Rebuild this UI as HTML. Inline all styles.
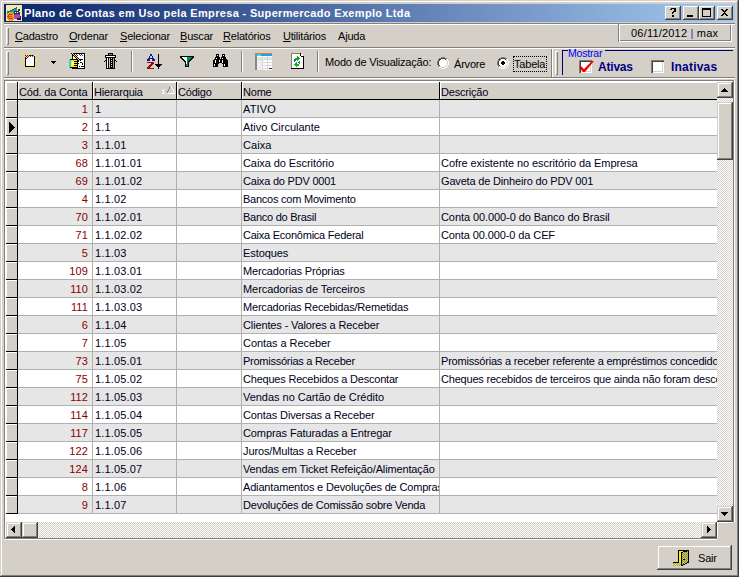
<!DOCTYPE html>
<html><head><meta charset="utf-8">
<style>
*{margin:0;padding:0;box-sizing:border-box}
html,body{width:739px;height:577px;overflow:hidden;background:#D4D0C8;font-family:"Liberation Sans",sans-serif;font-size:11px;color:#000}
.a{position:absolute}
.txt{position:absolute;white-space:nowrap;line-height:13px;letter-spacing:-0.2px}
.u{text-decoration:underline;text-underline-offset:1px}
svg{position:absolute;overflow:visible}
</style></head><body>
<div class="a" style="left:0px;top:0px;width:739px;height:577px;background:#D4D0C8;"></div>
<div class="a" style="left:0px;top:0px;width:738px;height:1px;background:#D4D0C8;"></div>
<div class="a" style="left:0px;top:0px;width:1px;height:576px;background:#D4D0C8;"></div>
<div class="a" style="left:1px;top:1px;width:736px;height:1px;background:#FFFFFF;"></div>
<div class="a" style="left:1px;top:1px;width:1px;height:575px;background:#FFFFFF;"></div>
<div class="a" style="left:0px;top:576px;width:739px;height:1px;background:#404040;"></div>
<div class="a" style="left:738px;top:0px;width:1px;height:577px;background:#404040;"></div>
<div class="a" style="left:1px;top:575px;width:737px;height:1px;background:#808080;"></div>
<div class="a" style="left:737px;top:1px;width:1px;height:575px;background:#808080;"></div>
<div class="a" style="left:4px;top:4px;width:731px;height:18px;background:linear-gradient(to right,#0A246A,#A6CAF0)"></div>
<svg style="left:6px;top:5px" width="16" height="16" shape-rendering="crispEdges"><rect x="0" y="0" width="16" height="16" fill="#F6E8A8"/><rect x="1" y="6" width="1" height="1" fill="#0C6C50"/><rect x="1" y="7" width="1" height="3" fill="#10A8A0"/><rect x="1" y="10" width="1" height="1" fill="#40D8E8"/><rect x="2" y="6" width="1" height="1" fill="#0C6C50"/><rect x="2" y="7" width="1" height="3" fill="#10A8A0"/><rect x="2" y="10" width="1" height="1" fill="#40D8E8"/><rect x="3" y="6" width="1" height="1" fill="#0C6C50"/><rect x="3" y="7" width="1" height="3" fill="#10A8A0"/><rect x="3" y="10" width="1" height="1" fill="#40D8E8"/><rect x="4" y="5" width="1" height="1" fill="#0C6C50"/><rect x="4" y="6" width="1" height="3" fill="#10A8A0"/><rect x="4" y="9" width="1" height="1" fill="#40D8E8"/><rect x="5" y="5" width="1" height="1" fill="#0C6C50"/><rect x="5" y="6" width="1" height="3" fill="#10A8A0"/><rect x="5" y="9" width="1" height="1" fill="#40D8E8"/><rect x="6" y="4" width="1" height="1" fill="#0C6C50"/><rect x="6" y="5" width="1" height="3" fill="#10A8A0"/><rect x="6" y="8" width="1" height="1" fill="#40D8E8"/><rect x="7" y="4" width="1" height="1" fill="#0C6C50"/><rect x="7" y="5" width="1" height="3" fill="#10A8A0"/><rect x="7" y="8" width="1" height="1" fill="#40D8E8"/><rect x="8" y="3" width="1" height="1" fill="#0C6C50"/><rect x="8" y="4" width="1" height="3" fill="#10A8A0"/><rect x="8" y="7" width="1" height="1" fill="#40D8E8"/><rect x="9" y="3" width="1" height="1" fill="#0C6C50"/><rect x="9" y="4" width="1" height="3" fill="#10A8A0"/><rect x="9" y="7" width="1" height="1" fill="#40D8E8"/><rect x="10" y="2" width="1" height="1" fill="#0C6C50"/><rect x="10" y="3" width="1" height="3" fill="#10A8A0"/><rect x="10" y="6" width="1" height="1" fill="#40D8E8"/><rect x="8" y="6" width="6" height="5" fill="#3A3060"/><rect x="12" y="4" width="2" height="2" fill="#3A3060"/><rect x="9" y="7" width="1" height="1" fill="#F0F0FF"/><rect x="11" y="7" width="1" height="1" fill="#F0F0FF"/><rect x="13" y="6" width="1" height="1" fill="#F0F0FF"/><rect x="10" y="9" width="1" height="1" fill="#F0F0FF"/><rect x="12" y="9" width="1" height="1" fill="#F0F0FF"/><rect x="8" y="10" width="6" height="4" fill="#B040C8"/><rect x="9" y="9" width="4" height="1" fill="#9038B0"/><rect x="11" y="13" width="4" height="2" fill="#202030"/><rect x="14" y="11" width="1" height="3" fill="#202030"/><rect x="2" y="8" width="6" height="7" fill="#F09818"/><rect x="1" y="9" width="1" height="5" fill="#F09818"/><rect x="3" y="15" width="4" height="1" fill="#F09818"/><rect x="3" y="7" width="4" height="1" fill="#F0A020"/><rect x="3" y="9" width="4" height="1" fill="#C03810"/><rect x="2" y="10" width="1" height="3" fill="#C03810"/><rect x="3" y="13" width="4" height="1" fill="#C03810"/><rect x="1" y="11" width="5" height="1" fill="#D04818"/><rect x="7" y="9" width="1" height="1" fill="#F8D060"/><rect x="7" y="13" width="1" height="1" fill="#F8D060"/></svg>
<div class="txt" style="left:24px;top:7px;color:#fff;font-weight:bold;letter-spacing:0.33px">Plano de Contas em Uso pela Empresa - Supermercado Exemplo Ltda</div>
<div class="a" style="left:665px;top:6px;width:16px;height:14px;background:#D4D0C8;box-shadow:inset -1px -1px #404040,inset 1px 1px #FFFFFF,inset -2px -2px #808080,inset 2px 2px #D4D0C8"></div>
<div class="a" style="left:683px;top:6px;width:16px;height:14px;background:#D4D0C8;box-shadow:inset -1px -1px #404040,inset 1px 1px #FFFFFF,inset -2px -2px #808080,inset 2px 2px #D4D0C8"></div>
<div class="a" style="left:699px;top:6px;width:16px;height:14px;background:#D4D0C8;box-shadow:inset -1px -1px #404040,inset 1px 1px #FFFFFF,inset -2px -2px #808080,inset 2px 2px #D4D0C8"></div>
<div class="a" style="left:717px;top:6px;width:16px;height:14px;background:#D4D0C8;box-shadow:inset -1px -1px #404040,inset 1px 1px #FFFFFF,inset -2px -2px #808080,inset 2px 2px #D4D0C8"></div>
<svg style="left:665px;top:6px" width="16" height="14" shape-rendering="crispEdges"><path d="M5 3 L6 2 L10 2 L11 3 L11 5 L10 6 L9 6 L8 7 L8 8 L7 8 L7 6 L8 5 L9 5 L9 3 L7 3 L7 4 L5 4 Z" fill="#000"/><rect x="7" y="9" width="2" height="2" fill="#000"/></svg>
<svg style="left:683px;top:6px" width="16" height="14" shape-rendering="crispEdges"><rect x="4" y="9" width="6" height="2" fill="#000"/></svg>
<svg style="left:699px;top:6px" width="16" height="14" shape-rendering="crispEdges"><rect x="3" y="2" width="9" height="9" fill="#000"/><rect x="4" y="4" width="7" height="6" fill="#D4D0C8"/></svg>
<svg style="left:717px;top:6px" width="16" height="14" shape-rendering="crispEdges"><path d="M4 3h2v1h1v1h1v-1h1v-1h2v1h-1v1h-1v1h-1v1h1v1h1v1h1v1h-2v-1h-1v-1h-1v1h-1v1h-2v-1h1v-1h1v-1h1v-1h-1v-1h-1v-1h-1z" fill="#000"/></svg>
<div class="a" style="left:4px;top:23px;width:731px;height:1px;background:#808080;"></div>
<div class="a" style="left:4px;top:24px;width:731px;height:1px;background:#FFFFFF;"></div>
<div class="a" style="left:4px;top:47px;width:731px;height:1px;background:#808080;"></div>
<div class="a" style="left:4px;top:48px;width:731px;height:1px;background:#FFFFFF;"></div>
<div class="a" style="left:6px;top:27px;width:3px;height:18px;background:#D4D0C8;box-shadow:inset 1px 1px #FFFFFF,inset -1px -1px #808080"></div>
<div class="txt" style="left:15px;top:30px;color:#000;"><span class="u">C</span>adastro</div>
<div class="txt" style="left:69px;top:30px;color:#000;"><span class="u">O</span>rdenar</div>
<div class="txt" style="left:120px;top:30px;color:#000;"><span class="u">S</span>elecionar</div>
<div class="txt" style="left:180px;top:30px;color:#000;"><span class="u">B</span>uscar</div>
<div class="txt" style="left:223px;top:30px;color:#000;"><span class="u">R</span>elatórios</div>
<div class="txt" style="left:283px;top:30px;color:#000;"><span class="u">U</span>tilitários</div>
<div class="txt" style="left:338px;top:30px;color:#000;">A<span class="u">j</span>uda</div>
<div class="a" style="left:618px;top:23px;width:114px;height:19px;background:#D4D0C8;box-shadow:inset 1px 1px #808080,inset -1px -1px #FFFFFF,inset 2px 2px #FFFFFF,inset -2px -2px #808080"></div>
<div class="txt" style="left:631px;top:27px;color:#000;letter-spacing:0.2px">06/11/2012 <span style="color:#0040C0">|</span> max</div>
<div class="a" style="left:4px;top:77px;width:731px;height:1px;background:#808080;"></div>
<div class="a" style="left:4px;top:78px;width:731px;height:1px;background:#FFFFFF;"></div>
<div class="a" style="left:6px;top:51px;width:3px;height:24px;background:#D4D0C8;box-shadow:inset 1px 1px #FFFFFF,inset -1px -1px #808080"></div>
<div class="a" style="left:131px;top:51px;width:1px;height:21px;background:#808080;"></div>
<div class="a" style="left:132px;top:51px;width:1px;height:21px;background:#FFFFFF;"></div>
<div class="a" style="left:241px;top:51px;width:1px;height:21px;background:#808080;"></div>
<div class="a" style="left:242px;top:51px;width:1px;height:21px;background:#FFFFFF;"></div>
<div class="a" style="left:317px;top:51px;width:1px;height:21px;background:#808080;"></div>
<div class="a" style="left:318px;top:51px;width:1px;height:21px;background:#FFFFFF;"></div>
<div class="a" style="left:551px;top:49px;width:1px;height:28px;background:#808080;"></div>
<div class="a" style="left:552px;top:49px;width:1px;height:28px;background:#FFFFFF;"></div>
<div class="a" style="left:555px;top:51px;width:3px;height:24px;background:#D4D0C8;box-shadow:inset 1px 1px #FFFFFF,inset -1px -1px #808080"></div>
<div class="txt" style="left:325px;top:56px;color:#000;">Modo de Visualização:</div>
<svg style="left:437px;top:57px" width="12" height="12" shape-rendering="crispEdges"><rect x="4" y="0" width="1" height="1" fill="#808080"/><rect x="5" y="0" width="1" height="1" fill="#808080"/><rect x="6" y="0" width="1" height="1" fill="#808080"/><rect x="7" y="0" width="1" height="1" fill="#808080"/><rect x="2" y="1" width="1" height="1" fill="#808080"/><rect x="3" y="1" width="1" height="1" fill="#808080"/><rect x="8" y="1" width="1" height="1" fill="#808080"/><rect x="9" y="1" width="1" height="1" fill="#808080"/><rect x="1" y="2" width="1" height="1" fill="#808080"/><rect x="10" y="2" width="1" height="1" fill="#FFFFFF"/><rect x="1" y="3" width="1" height="1" fill="#808080"/><rect x="10" y="3" width="1" height="1" fill="#FFFFFF"/><rect x="0" y="4" width="1" height="1" fill="#808080"/><rect x="11" y="4" width="1" height="1" fill="#FFFFFF"/><rect x="0" y="5" width="1" height="1" fill="#808080"/><rect x="11" y="5" width="1" height="1" fill="#FFFFFF"/><rect x="0" y="6" width="1" height="1" fill="#808080"/><rect x="11" y="6" width="1" height="1" fill="#FFFFFF"/><rect x="0" y="7" width="1" height="1" fill="#808080"/><rect x="11" y="7" width="1" height="1" fill="#FFFFFF"/><rect x="1" y="8" width="1" height="1" fill="#808080"/><rect x="10" y="8" width="1" height="1" fill="#FFFFFF"/><rect x="1" y="9" width="1" height="1" fill="#808080"/><rect x="10" y="9" width="1" height="1" fill="#FFFFFF"/><rect x="2" y="10" width="1" height="1" fill="#FFFFFF"/><rect x="3" y="10" width="1" height="1" fill="#FFFFFF"/><rect x="8" y="10" width="1" height="1" fill="#FFFFFF"/><rect x="9" y="10" width="1" height="1" fill="#FFFFFF"/><rect x="4" y="11" width="1" height="1" fill="#FFFFFF"/><rect x="5" y="11" width="1" height="1" fill="#FFFFFF"/><rect x="6" y="11" width="1" height="1" fill="#FFFFFF"/><rect x="7" y="11" width="1" height="1" fill="#FFFFFF"/><rect x="4" y="1" width="1" height="1" fill="#404040"/><rect x="5" y="1" width="1" height="1" fill="#404040"/><rect x="6" y="1" width="1" height="1" fill="#404040"/><rect x="7" y="1" width="1" height="1" fill="#404040"/><rect x="2" y="2" width="1" height="1" fill="#404040"/><rect x="3" y="2" width="1" height="1" fill="#404040"/><rect x="8" y="2" width="1" height="1" fill="#404040"/><rect x="9" y="2" width="1" height="1" fill="#D4D0C8"/><rect x="2" y="3" width="1" height="1" fill="#404040"/><rect x="9" y="3" width="1" height="1" fill="#D4D0C8"/><rect x="1" y="4" width="1" height="1" fill="#404040"/><rect x="10" y="4" width="1" height="1" fill="#D4D0C8"/><rect x="1" y="5" width="1" height="1" fill="#404040"/><rect x="10" y="5" width="1" height="1" fill="#D4D0C8"/><rect x="1" y="6" width="1" height="1" fill="#404040"/><rect x="10" y="6" width="1" height="1" fill="#D4D0C8"/><rect x="1" y="7" width="1" height="1" fill="#404040"/><rect x="10" y="7" width="1" height="1" fill="#D4D0C8"/><rect x="2" y="8" width="1" height="1" fill="#404040"/><rect x="9" y="8" width="1" height="1" fill="#D4D0C8"/><rect x="2" y="9" width="1" height="1" fill="#D4D0C8"/><rect x="3" y="9" width="1" height="1" fill="#D4D0C8"/><rect x="8" y="9" width="1" height="1" fill="#D4D0C8"/><rect x="9" y="9" width="1" height="1" fill="#D4D0C8"/><rect x="4" y="10" width="1" height="1" fill="#D4D0C8"/><rect x="5" y="10" width="1" height="1" fill="#D4D0C8"/><rect x="6" y="10" width="1" height="1" fill="#D4D0C8"/><rect x="7" y="10" width="1" height="1" fill="#D4D0C8"/><rect x="4" y="2" width="4" height="1" fill="#fff"/><rect x="3" y="3" width="6" height="1" fill="#fff"/><rect x="2" y="4" width="8" height="1" fill="#fff"/><rect x="2" y="5" width="8" height="1" fill="#fff"/><rect x="2" y="6" width="8" height="1" fill="#fff"/><rect x="2" y="7" width="8" height="1" fill="#fff"/><rect x="3" y="8" width="6" height="1" fill="#fff"/><rect x="4" y="9" width="4" height="1" fill="#fff"/></svg>
<svg style="left:497px;top:57px" width="12" height="12" shape-rendering="crispEdges"><rect x="4" y="0" width="1" height="1" fill="#808080"/><rect x="5" y="0" width="1" height="1" fill="#808080"/><rect x="6" y="0" width="1" height="1" fill="#808080"/><rect x="7" y="0" width="1" height="1" fill="#808080"/><rect x="2" y="1" width="1" height="1" fill="#808080"/><rect x="3" y="1" width="1" height="1" fill="#808080"/><rect x="8" y="1" width="1" height="1" fill="#808080"/><rect x="9" y="1" width="1" height="1" fill="#808080"/><rect x="1" y="2" width="1" height="1" fill="#808080"/><rect x="10" y="2" width="1" height="1" fill="#FFFFFF"/><rect x="1" y="3" width="1" height="1" fill="#808080"/><rect x="10" y="3" width="1" height="1" fill="#FFFFFF"/><rect x="0" y="4" width="1" height="1" fill="#808080"/><rect x="11" y="4" width="1" height="1" fill="#FFFFFF"/><rect x="0" y="5" width="1" height="1" fill="#808080"/><rect x="11" y="5" width="1" height="1" fill="#FFFFFF"/><rect x="0" y="6" width="1" height="1" fill="#808080"/><rect x="11" y="6" width="1" height="1" fill="#FFFFFF"/><rect x="0" y="7" width="1" height="1" fill="#808080"/><rect x="11" y="7" width="1" height="1" fill="#FFFFFF"/><rect x="1" y="8" width="1" height="1" fill="#808080"/><rect x="10" y="8" width="1" height="1" fill="#FFFFFF"/><rect x="1" y="9" width="1" height="1" fill="#808080"/><rect x="10" y="9" width="1" height="1" fill="#FFFFFF"/><rect x="2" y="10" width="1" height="1" fill="#FFFFFF"/><rect x="3" y="10" width="1" height="1" fill="#FFFFFF"/><rect x="8" y="10" width="1" height="1" fill="#FFFFFF"/><rect x="9" y="10" width="1" height="1" fill="#FFFFFF"/><rect x="4" y="11" width="1" height="1" fill="#FFFFFF"/><rect x="5" y="11" width="1" height="1" fill="#FFFFFF"/><rect x="6" y="11" width="1" height="1" fill="#FFFFFF"/><rect x="7" y="11" width="1" height="1" fill="#FFFFFF"/><rect x="4" y="1" width="1" height="1" fill="#404040"/><rect x="5" y="1" width="1" height="1" fill="#404040"/><rect x="6" y="1" width="1" height="1" fill="#404040"/><rect x="7" y="1" width="1" height="1" fill="#404040"/><rect x="2" y="2" width="1" height="1" fill="#404040"/><rect x="3" y="2" width="1" height="1" fill="#404040"/><rect x="8" y="2" width="1" height="1" fill="#404040"/><rect x="9" y="2" width="1" height="1" fill="#D4D0C8"/><rect x="2" y="3" width="1" height="1" fill="#404040"/><rect x="9" y="3" width="1" height="1" fill="#D4D0C8"/><rect x="1" y="4" width="1" height="1" fill="#404040"/><rect x="10" y="4" width="1" height="1" fill="#D4D0C8"/><rect x="1" y="5" width="1" height="1" fill="#404040"/><rect x="10" y="5" width="1" height="1" fill="#D4D0C8"/><rect x="1" y="6" width="1" height="1" fill="#404040"/><rect x="10" y="6" width="1" height="1" fill="#D4D0C8"/><rect x="1" y="7" width="1" height="1" fill="#404040"/><rect x="10" y="7" width="1" height="1" fill="#D4D0C8"/><rect x="2" y="8" width="1" height="1" fill="#404040"/><rect x="9" y="8" width="1" height="1" fill="#D4D0C8"/><rect x="2" y="9" width="1" height="1" fill="#D4D0C8"/><rect x="3" y="9" width="1" height="1" fill="#D4D0C8"/><rect x="8" y="9" width="1" height="1" fill="#D4D0C8"/><rect x="9" y="9" width="1" height="1" fill="#D4D0C8"/><rect x="4" y="10" width="1" height="1" fill="#D4D0C8"/><rect x="5" y="10" width="1" height="1" fill="#D4D0C8"/><rect x="6" y="10" width="1" height="1" fill="#D4D0C8"/><rect x="7" y="10" width="1" height="1" fill="#D4D0C8"/><rect x="4" y="2" width="4" height="1" fill="#fff"/><rect x="3" y="3" width="6" height="1" fill="#fff"/><rect x="2" y="4" width="8" height="1" fill="#fff"/><rect x="2" y="5" width="8" height="1" fill="#fff"/><rect x="2" y="6" width="8" height="1" fill="#fff"/><rect x="2" y="7" width="8" height="1" fill="#fff"/><rect x="3" y="8" width="6" height="1" fill="#fff"/><rect x="4" y="9" width="4" height="1" fill="#fff"/><rect x="5" y="4" width="2" height="1" fill="#000"/><rect x="4" y="5" width="4" height="2" fill="#000"/><rect x="5" y="7" width="2" height="1" fill="#000"/></svg>
<div class="txt" style="left:454px;top:58px;color:#000;">Árvore</div>
<div class="txt" style="left:514px;top:58px;color:#000;">Tabela</div>
<div class="a" style="left:513px;top:56px;width:34px;height:16px;border:1px dotted #000"></div>
<div class="a" style="left:562px;top:50px;width:6px;height:1px;background:#000080;"></div>
<div class="a" style="left:605px;top:50px;width:128px;height:1px;background:#000080;"></div>
<div class="a" style="left:562px;top:50px;width:1px;height:25px;background:#000080;"></div>
<div class="txt" style="left:568px;top:47px;color:#0000F0;font-size:10.5px">Mostrar</div>
<div class="a" style="left:579px;top:60px;width:13px;height:13px;background:#fff;box-shadow:inset 1px 1px #808080,inset 2px 2px #404040,inset -1px -1px #FFFFFF,inset -2px -2px #D4D0C8"></div>
<div class="a" style="left:651px;top:60px;width:13px;height:13px;background:#fff;box-shadow:inset 1px 1px #808080,inset 2px 2px #404040,inset -1px -1px #FFFFFF,inset -2px -2px #D4D0C8"></div>
<svg style="left:578px;top:60px" width="17" height="14" viewBox="0 0 17 14"><path d="M1 7 L3 6 L6 9 L14 1 L16 1 L7 12 L5 12 Z" fill="#F00000"/></svg>
<div class="txt" style="left:598px;top:61px;color:#000080;font-weight:bold;font-size:12px">Ativas</div>
<div class="txt" style="left:671px;top:61px;color:#000080;font-weight:bold;font-size:12px;letter-spacing:0.2px">Inativas</div>
<svg style="left:20px;top:50px" width="22" height="22" shape-rendering="crispEdges"><rect x="2" y="3" width="2" height="2" fill="#F8F000"/><rect x="9" y="3" width="2" height="2" fill="#F8F000"/><rect x="16" y="3" width="2" height="2" fill="#F8F000"/><rect x="2" y="10" width="2" height="2" fill="#F8F000"/><rect x="15" y="10" width="2" height="2" fill="#F8F000"/><rect x="4" y="16" width="2" height="2" fill="#F8F000"/><rect x="9" y="17" width="2" height="2" fill="#F8F000"/><rect x="15" y="16" width="2" height="2" fill="#F8F000"/><rect x="5" y="5" width="10" height="12" fill="#000"/><rect x="6" y="6" width="8" height="10" fill="#fff"/><rect x="14" y="5" width="1" height="1" fill="#fff"/><rect x="5" y="5" width="1" height="1" fill="#A00000"/><rect x="7" y="5" width="1" height="1" fill="#A00000"/><rect x="6" y="6" width="1" height="1" fill="#A00000"/><rect x="8" y="6" width="1" height="1" fill="#A00000"/><rect x="5" y="7" width="1" height="1" fill="#A00000"/><rect x="7" y="7" width="1" height="1" fill="#A00000"/><rect x="6" y="8" width="1" height="1" fill="#A00000"/><rect x="6" y="5" width="1" height="1" fill="#F0C0C0"/><rect x="8" y="5" width="1" height="1" fill="#F0C0C0"/><rect x="5" y="6" width="1" height="1" fill="#F0C0C0"/><rect x="7" y="6" width="1" height="1" fill="#F0C0C0"/><rect x="6" y="7" width="1" height="1" fill="#F0C0C0"/><rect x="10" y="6" width="1" height="1" fill="#0070A0"/><rect x="12" y="6" width="1" height="1" fill="#0070A0"/><rect x="11" y="5" width="1" height="1" fill="#0070A0"/><rect x="13" y="5" width="1" height="1" fill="#0070A0"/></svg>
<svg style="left:51px;top:61px" width="5" height="3" shape-rendering="crispEdges"><path d="M0 0h5v1h-1v1h-1v1h-1v-1h-1v-1h-1z" fill="#000"/></svg>
<svg style="left:66px;top:50px" width="22" height="22" shape-rendering="crispEdges"><rect x="6" y="3" width="13" height="16" fill="#000"/><rect x="7" y="4" width="11" height="14" fill="#fff"/><rect x="6" y="4" width="1" height="1" fill="#C00000"/><rect x="8" y="4" width="1" height="1" fill="#C00000"/><rect x="7" y="5" width="1" height="1" fill="#C00000"/><rect x="9" y="5" width="1" height="1" fill="#C00000"/><rect x="10" y="4" width="1" height="1" fill="#C00000"/><rect x="11" y="5" width="1" height="1" fill="#C00000"/><rect x="13" y="4" width="1" height="1" fill="#0040C0"/><rect x="15" y="4" width="1" height="1" fill="#0040C0"/><rect x="14" y="5" width="1" height="1" fill="#0040C0"/><rect x="16" y="5" width="1" height="1" fill="#0040C0"/><rect x="14" y="9" width="3" height="1" fill="#000"/><rect x="14" y="12" width="2" height="1" fill="#000"/><rect x="16" y="13" width="1" height="2" fill="#000"/><rect x="13" y="16" width="1" height="1" fill="#000"/><rect x="15" y="16" width="3" height="1" fill="#000"/><rect x="5" y="3" width="1" height="1" fill="#000"/><rect x="6" y="3" width="1" height="1" fill="#F8E800"/><rect x="7" y="3" width="1" height="1" fill="#000"/><rect x="6" y="4" width="1" height="1" fill="#000"/><rect x="7" y="4" width="1" height="1" fill="#F8E800"/><rect x="8" y="4" width="1" height="1" fill="#000"/><rect x="7" y="5" width="1" height="1" fill="#000"/><rect x="8" y="5" width="1" height="1" fill="#F8E800"/><rect x="9" y="5" width="1" height="1" fill="#000"/><rect x="8" y="6" width="1" height="1" fill="#000"/><rect x="9" y="6" width="1" height="1" fill="#F8E800"/><rect x="10" y="6" width="1" height="1" fill="#000"/><rect x="9" y="7" width="1" height="1" fill="#000"/><rect x="10" y="7" width="1" height="1" fill="#F8E800"/><rect x="11" y="7" width="1" height="1" fill="#000"/><rect x="10" y="8" width="1" height="1" fill="#000"/><rect x="11" y="8" width="1" height="1" fill="#F8E800"/><rect x="12" y="8" width="1" height="1" fill="#000"/><rect x="11" y="9" width="1" height="1" fill="#000"/><rect x="12" y="9" width="1" height="1" fill="#F8E800"/><rect x="13" y="9" width="1" height="1" fill="#000"/><rect x="12" y="10" width="1" height="1" fill="#000"/><rect x="13" y="10" width="1" height="1" fill="#F8E800"/><rect x="14" y="10" width="1" height="1" fill="#000"/><rect x="4" y="9" width="8" height="9" fill="#000"/><rect x="5" y="10" width="6" height="7" fill="#F8F000"/><rect x="8" y="11" width="5" height="1" fill="#000"/><rect x="8" y="13" width="5" height="1" fill="#000"/><rect x="8" y="15" width="4" height="1" fill="#000"/><rect x="6" y="12" width="2" height="3" fill="#FFFFA0"/><rect x="3" y="10" width="2" height="7" fill="#30D0E0"/></svg>
<svg style="left:100px;top:50px" width="22" height="22" shape-rendering="crispEdges"><rect x="8" y="3" width="5" height="2" fill="#000"/><rect x="9" y="4" width="3" height="1" fill="#808080"/><rect x="5" y="5" width="11" height="3" fill="#000"/><rect x="6" y="6" width="9" height="1" fill="#fff"/><rect x="4" y="11" width="1" height="1" fill="#000"/><rect x="16" y="11" width="1" height="1" fill="#000"/><rect x="5" y="10" width="1" height="1" fill="#000"/><rect x="15" y="10" width="1" height="1" fill="#000"/><rect x="6" y="7" width="9" height="12" fill="#000"/><rect x="7" y="8" width="1" height="10" fill="#fff"/><rect x="9" y="8" width="1" height="10" fill="#C8C8C8"/><rect x="11" y="8" width="1" height="1" fill="#E0E0E0"/><rect x="11" y="10" width="1" height="1" fill="#E0E0E0"/><rect x="11" y="12" width="1" height="1" fill="#E0E0E0"/><rect x="11" y="14" width="1" height="1" fill="#E0E0E0"/><rect x="11" y="16" width="1" height="1" fill="#E0E0E0"/><rect x="13" y="8" width="1" height="10" fill="#A0A0A0"/></svg>
<svg style="left:143px;top:50px" width="22" height="22" shape-rendering="crispEdges"><rect x="7" y="4" width="2" height="1" fill="#102090"/><rect x="7" y="5" width="2" height="1" fill="#102090"/><rect x="6" y="6" width="4" height="1" fill="#102090"/><rect x="6" y="7" width="4" height="1" fill="#102090"/><rect x="5" y="8" width="6" height="1" fill="#102090"/><rect x="4" y="9" width="8" height="1" fill="#102090"/><rect x="4" y="10" width="8" height="1" fill="#102090"/><rect x="7" y="6" width="2" height="2" fill="#C0C8FF"/><rect x="7" y="9" width="2" height="2" fill="#E8D8D0"/><rect x="4" y="12" width="7" height="1" fill="#A00808"/><rect x="8" y="13" width="3" height="1" fill="#A00808"/><rect x="7" y="14" width="3" height="1" fill="#A00808"/><rect x="6" y="15" width="3" height="1" fill="#A00808"/><rect x="5" y="16" width="3" height="1" fill="#A00808"/><rect x="4" y="17" width="3" height="1" fill="#A00808"/><rect x="4" y="18" width="7" height="1" fill="#A00808"/><rect x="15" y="4" width="1" height="14" fill="#000"/><rect x="12" y="14" width="7" height="1" fill="#000"/><rect x="13" y="15" width="5" height="1" fill="#000"/><rect x="14" y="16" width="3" height="1" fill="#000"/><rect x="15" y="17" width="1" height="1" fill="#000"/><rect x="15" y="18" width="1" height="1" fill="#000"/></svg>
<svg style="left:176px;top:50px" width="22" height="22" shape-rendering="crispEdges"><rect x="4" y="6" width="14" height="1" fill="#000"/><rect x="4" y="7" width="2" height="1" fill="#000"/><rect x="16" y="7" width="2" height="1" fill="#000"/><rect x="6" y="7" width="5" height="1" fill="#F0FFF8"/><rect x="11" y="7" width="5" height="1" fill="#008868"/><rect x="5" y="8" width="2" height="1" fill="#000"/><rect x="15" y="8" width="2" height="1" fill="#000"/><rect x="7" y="8" width="4" height="1" fill="#F0FFF8"/><rect x="11" y="8" width="4" height="1" fill="#008868"/><rect x="6" y="9" width="2" height="1" fill="#000"/><rect x="14" y="9" width="2" height="1" fill="#000"/><rect x="8" y="9" width="3" height="1" fill="#F0FFF8"/><rect x="11" y="9" width="3" height="1" fill="#008868"/><rect x="7" y="10" width="2" height="1" fill="#000"/><rect x="13" y="10" width="2" height="1" fill="#000"/><rect x="9" y="10" width="2" height="1" fill="#F0FFF8"/><rect x="11" y="10" width="2" height="1" fill="#008868"/><rect x="8" y="11" width="2" height="1" fill="#000"/><rect x="12" y="11" width="2" height="1" fill="#000"/><rect x="10" y="11" width="1" height="1" fill="#F0FFF8"/><rect x="11" y="11" width="1" height="1" fill="#008868"/><rect x="9" y="12" width="1" height="1" fill="#000"/><rect x="12" y="12" width="1" height="1" fill="#000"/><rect x="10" y="12" width="2" height="1" fill="#008868"/><rect x="9" y="13" width="1" height="1" fill="#000"/><rect x="12" y="13" width="1" height="1" fill="#000"/><rect x="10" y="13" width="2" height="1" fill="#008868"/><rect x="9" y="14" width="1" height="1" fill="#000"/><rect x="12" y="14" width="1" height="1" fill="#000"/><rect x="10" y="14" width="2" height="1" fill="#008868"/><rect x="9" y="15" width="1" height="1" fill="#000"/><rect x="12" y="15" width="1" height="1" fill="#000"/><rect x="10" y="15" width="2" height="1" fill="#008868"/><rect x="10" y="12" width="1" height="2" fill="#F0FFF8"/><rect x="9" y="16" width="4" height="1" fill="#000"/></svg>
<svg style="left:210px;top:50px" width="22" height="22" shape-rendering="crispEdges"><rect x="6" y="4" width="3" height="3" fill="#000"/><rect x="12" y="4" width="3" height="3" fill="#000"/><rect x="5" y="7" width="5" height="2" fill="#000"/><rect x="11" y="7" width="5" height="2" fill="#000"/><rect x="4" y="9" width="13" height="1" fill="#000"/><rect x="3" y="10" width="15" height="3" fill="#000"/><rect x="3" y="13" width="6" height="1" fill="#000"/><rect x="12" y="13" width="6" height="1" fill="#000"/><rect x="3" y="14" width="5" height="3" fill="#000"/><rect x="13" y="14" width="5" height="3" fill="#000"/><rect x="7" y="5" width="1" height="1" fill="#fff"/><rect x="13" y="5" width="1" height="1" fill="#fff"/><rect x="6" y="8" width="1" height="1" fill="#fff"/><rect x="12" y="8" width="1" height="1" fill="#fff"/><rect x="5" y="10" width="1" height="3" fill="#fff"/><rect x="9" y="10" width="1" height="2" fill="#fff"/><rect x="12" y="10" width="1" height="3" fill="#fff"/><rect x="4" y="14" width="1" height="2" fill="#fff"/><rect x="14" y="14" width="1" height="2" fill="#fff"/></svg>
<svg style="left:252px;top:50px" width="22" height="22" shape-rendering="crispEdges"><rect x="4" y="3" width="16" height="1" fill="#F07030"/><rect x="4" y="4" width="16" height="2" fill="#10A8F0"/><rect x="4" y="4" width="5" height="2" fill="#40D0F8"/><rect x="3" y="3" width="2" height="17" fill="#888888"/><rect x="5" y="6" width="15" height="14" fill="#fff"/><rect x="5" y="7" width="15" height="3" fill="#E4E4E4"/><rect x="5" y="9" width="15" height="1" fill="#D8D8D8"/><rect x="5" y="12" width="15" height="1" fill="#D8D8D8"/><rect x="5" y="15" width="15" height="1" fill="#D8D8D8"/><rect x="5" y="18" width="15" height="1" fill="#D8D8D8"/><rect x="10" y="6" width="1" height="14" fill="#D8D8D8"/><rect x="15" y="6" width="1" height="14" fill="#D8D8D8"/><rect x="5" y="10" width="5" height="10" fill="#ECECEC"/><rect x="17" y="18" width="3" height="1" fill="#303030"/></svg>
<svg style="left:286px;top:50px" width="22" height="22" shape-rendering="crispEdges"><rect x="5" y="3" width="13" height="16" fill="#000"/><rect x="5" y="3" width="9" height="1" fill="#808080"/><rect x="5" y="3" width="1" height="15" fill="#808080"/><rect x="6" y="4" width="11" height="14" fill="#FFFFF8"/><rect x="14" y="3" width="4" height="3" fill="#D4D0C8"/><rect x="14" y="3" width="1" height="3" fill="#000"/><rect x="15" y="6" width="3" height="1" fill="#000"/><rect x="15" y="5" width="1" height="1" fill="#000"/><rect x="15" y="4" width="2" height="2" fill="#fff"/><rect x="11" y="6" width="1" height="1" fill="#10B010"/><rect x="11" y="7" width="2" height="1" fill="#10B010"/><rect x="9" y="8" width="5" height="1" fill="#10B010"/><rect x="9" y="9" width="4" height="1" fill="#10B010"/><rect x="11" y="10" width="1" height="1" fill="#10B010"/><rect x="8" y="9" width="1" height="3" fill="#1060D0"/><rect x="9" y="10" width="1" height="1" fill="#1060D0"/><rect x="10" y="12" width="1" height="1" fill="#10B010"/><rect x="9" y="13" width="2" height="1" fill="#10B010"/><rect x="8" y="14" width="5" height="1" fill="#10B010"/><rect x="9" y="15" width="4" height="1" fill="#10B010"/><rect x="10" y="16" width="1" height="1" fill="#10B010"/><rect x="13" y="11" width="1" height="3" fill="#108888"/><rect x="12" y="12" width="1" height="1" fill="#108888"/></svg>
<div class="a" style="left:4px;top:80px;width:731px;height:1px;background:#808080;"></div>
<div class="a" style="left:4px;top:80px;width:1px;height:460px;background:#808080;"></div>
<div class="a" style="left:4px;top:539px;width:731px;height:1px;background:#FFFFFF;"></div>
<div class="a" style="left:734px;top:80px;width:1px;height:460px;background:#FFFFFF;"></div>
<div class="a" style="left:5px;top:81px;width:729px;height:1px;background:#FFFFFF;"></div>
<div class="a" style="left:5px;top:81px;width:1px;height:458px;background:#FFFFFF;"></div>
<div class="a" style="left:5px;top:538px;width:729px;height:1px;background:#808080;"></div>
<div class="a" style="left:733px;top:81px;width:1px;height:458px;background:#808080;"></div>
<div class="a" style="left:6px;top:82px;width:727px;height:456px;background:#fff;"></div>
<div class="a" style="left:6px;top:82px;width:711px;height:17px;background:#D4D0C8;"></div>
<div class="a" style="left:6px;top:82px;width:711px;height:1px;background:#FFFFFF;"></div>
<div class="a" style="left:6px;top:82px;width:1px;height:17px;background:#FFFFFF;"></div>
<div class="a" style="left:17px;top:82px;width:1px;height:18px;background:#000;"></div>
<div class="a" style="left:6px;top:99px;width:711px;height:1px;background:#000;"></div>
<div class="a" style="left:18px;top:82px;width:1px;height:17px;background:#FFFFFF;"></div>
<div class="a" style="left:92px;top:82px;width:1px;height:18px;background:#000;"></div>
<div class="a" style="left:93px;top:82px;width:1px;height:17px;background:#FFFFFF;"></div>
<div class="a" style="left:176px;top:82px;width:1px;height:18px;background:#000;"></div>
<div class="a" style="left:177px;top:82px;width:1px;height:17px;background:#FFFFFF;"></div>
<div class="a" style="left:241px;top:82px;width:1px;height:18px;background:#000;"></div>
<div class="a" style="left:242px;top:82px;width:1px;height:17px;background:#FFFFFF;"></div>
<div class="a" style="left:439px;top:82px;width:1px;height:18px;background:#000;"></div>
<div class="a" style="left:440px;top:82px;width:1px;height:17px;background:#FFFFFF;"></div>
<div class="txt" style="left:19px;top:86px;color:#000018;">Cód. da Conta</div>
<div class="txt" style="left:94px;top:86px;color:#000018;">Hierarquia</div>
<div class="txt" style="left:178px;top:86px;color:#000018;">Código</div>
<div class="txt" style="left:243px;top:86px;color:#000018;">Nome</div>
<div class="txt" style="left:441px;top:86px;color:#000018;">Descrição</div>
<svg style="left:160px;top:84px" width="16" height="12" shape-rendering="crispEdges"><rect x="10" y="1" width="1" height="2" fill="#808080"/><rect x="9" y="3" width="1" height="2" fill="#808080"/><rect x="8" y="5" width="1" height="2" fill="#808080"/><rect x="7" y="7" width="1" height="2" fill="#808080"/><rect x="10" y="1" width="1" height="1" fill="#fff"/><rect x="11" y="2" width="1" height="2" fill="#fff"/><rect x="12" y="4" width="1" height="2" fill="#fff"/><rect x="13" y="6" width="1" height="2" fill="#fff"/><rect x="14" y="8" width="1" height="1" fill="#fff"/><rect x="7" y="9" width="8" height="1" fill="#fff"/><rect x="3" y="5" width="1" height="5" fill="#fff"/><rect x="2" y="6" width="1" height="1" fill="#fff"/><rect x="2" y="9" width="3" height="1" fill="#fff"/></svg>
<div class="a" style="left:18px;top:100px;width:699px;height:17px;background:#E6E6E6;"></div>
<div class="a" style="left:18px;top:117px;width:699px;height:1px;background:#B0B0B0;"></div>
<div class="a" style="left:6px;top:100px;width:11px;height:17px;background:#D4D0C8;"></div>
<div class="a" style="left:6px;top:100px;width:11px;height:1px;background:#FFFFFF;"></div>
<div class="a" style="left:6px;top:100px;width:1px;height:17px;background:#FFFFFF;"></div>
<div class="a" style="left:6px;top:117px;width:12px;height:1px;background:#000;"></div>
<div class="a" style="left:17px;top:100px;width:1px;height:17px;background:#000;"></div>
<div class="txt" style="left:18px;width:70px;text-align:right;top:103px;color:#880000;letter-spacing:0.1px">1</div>
<div class="txt" style="left:95px;top:103px;color:#000018;letter-spacing:0.15px">1</div>
<div class="txt" style="left:243px;top:103px;width:196px;overflow:hidden;color:#000018;letter-spacing:0.150px">ATIVO</div>
<div class="a" style="left:18px;top:118px;width:699px;height:17px;background:#FFFFFF;"></div>
<div class="a" style="left:18px;top:135px;width:699px;height:1px;background:#B0B0B0;"></div>
<div class="a" style="left:6px;top:118px;width:11px;height:17px;background:#D4D0C8;"></div>
<div class="a" style="left:6px;top:118px;width:11px;height:1px;background:#FFFFFF;"></div>
<div class="a" style="left:6px;top:118px;width:1px;height:17px;background:#FFFFFF;"></div>
<div class="a" style="left:6px;top:135px;width:12px;height:1px;background:#000;"></div>
<div class="a" style="left:17px;top:118px;width:1px;height:17px;background:#000;"></div>
<div class="txt" style="left:18px;width:70px;text-align:right;top:121px;color:#880000;letter-spacing:0.1px">2</div>
<div class="txt" style="left:95px;top:121px;color:#000018;letter-spacing:0.15px">1.1</div>
<div class="txt" style="left:243px;top:121px;width:196px;overflow:hidden;color:#000018;letter-spacing:-0.013px">Ativo Circulante</div>
<div class="a" style="left:18px;top:136px;width:699px;height:17px;background:#E6E6E6;"></div>
<div class="a" style="left:18px;top:153px;width:699px;height:1px;background:#B0B0B0;"></div>
<div class="a" style="left:6px;top:136px;width:11px;height:17px;background:#D4D0C8;"></div>
<div class="a" style="left:6px;top:136px;width:11px;height:1px;background:#FFFFFF;"></div>
<div class="a" style="left:6px;top:136px;width:1px;height:17px;background:#FFFFFF;"></div>
<div class="a" style="left:6px;top:153px;width:12px;height:1px;background:#000;"></div>
<div class="a" style="left:17px;top:136px;width:1px;height:17px;background:#000;"></div>
<div class="txt" style="left:18px;width:70px;text-align:right;top:139px;color:#880000;letter-spacing:0.1px">3</div>
<div class="txt" style="left:95px;top:139px;color:#000018;letter-spacing:0.15px">1.1.01</div>
<div class="txt" style="left:243px;top:139px;width:196px;overflow:hidden;color:#000018;letter-spacing:0.075px">Caixa</div>
<div class="a" style="left:18px;top:154px;width:699px;height:17px;background:#FFFFFF;"></div>
<div class="a" style="left:18px;top:171px;width:699px;height:1px;background:#B0B0B0;"></div>
<div class="a" style="left:6px;top:154px;width:11px;height:17px;background:#D4D0C8;"></div>
<div class="a" style="left:6px;top:154px;width:11px;height:1px;background:#FFFFFF;"></div>
<div class="a" style="left:6px;top:154px;width:1px;height:17px;background:#FFFFFF;"></div>
<div class="a" style="left:6px;top:171px;width:12px;height:1px;background:#000;"></div>
<div class="a" style="left:17px;top:154px;width:1px;height:17px;background:#000;"></div>
<div class="txt" style="left:18px;width:70px;text-align:right;top:157px;color:#880000;letter-spacing:0.1px">68</div>
<div class="txt" style="left:95px;top:157px;color:#000018;letter-spacing:0.15px">1.1.01.01</div>
<div class="txt" style="left:243px;top:157px;width:196px;overflow:hidden;color:#000018;letter-spacing:-0.072px">Caixa do Escritório</div>
<div class="txt" style="left:441px;top:157px;width:276px;overflow:hidden;color:#000018;letter-spacing:-0.067px">Cofre existente no escritório da Empresa</div>
<div class="a" style="left:18px;top:172px;width:699px;height:17px;background:#E6E6E6;"></div>
<div class="a" style="left:18px;top:189px;width:699px;height:1px;background:#B0B0B0;"></div>
<div class="a" style="left:6px;top:172px;width:11px;height:17px;background:#D4D0C8;"></div>
<div class="a" style="left:6px;top:172px;width:11px;height:1px;background:#FFFFFF;"></div>
<div class="a" style="left:6px;top:172px;width:1px;height:17px;background:#FFFFFF;"></div>
<div class="a" style="left:6px;top:189px;width:12px;height:1px;background:#000;"></div>
<div class="a" style="left:17px;top:172px;width:1px;height:17px;background:#000;"></div>
<div class="txt" style="left:18px;width:70px;text-align:right;top:175px;color:#880000;letter-spacing:0.1px">69</div>
<div class="txt" style="left:95px;top:175px;color:#000018;letter-spacing:0.15px">1.1.01.02</div>
<div class="txt" style="left:243px;top:175px;width:196px;overflow:hidden;color:#000018;letter-spacing:-0.213px">Caixa do PDV 0001</div>
<div class="txt" style="left:441px;top:175px;width:276px;overflow:hidden;color:#000018;letter-spacing:-0.175px">Gaveta de Dinheiro do PDV 001</div>
<div class="a" style="left:18px;top:190px;width:699px;height:17px;background:#FFFFFF;"></div>
<div class="a" style="left:18px;top:207px;width:699px;height:1px;background:#B0B0B0;"></div>
<div class="a" style="left:6px;top:190px;width:11px;height:17px;background:#D4D0C8;"></div>
<div class="a" style="left:6px;top:190px;width:11px;height:1px;background:#FFFFFF;"></div>
<div class="a" style="left:6px;top:190px;width:1px;height:17px;background:#FFFFFF;"></div>
<div class="a" style="left:6px;top:207px;width:12px;height:1px;background:#000;"></div>
<div class="a" style="left:17px;top:190px;width:1px;height:17px;background:#000;"></div>
<div class="txt" style="left:18px;width:70px;text-align:right;top:193px;color:#880000;letter-spacing:0.1px">4</div>
<div class="txt" style="left:95px;top:193px;color:#000018;letter-spacing:0.15px">1.1.02</div>
<div class="txt" style="left:243px;top:193px;width:196px;overflow:hidden;color:#000018;letter-spacing:-0.237px">Bancos com Movimento</div>
<div class="a" style="left:18px;top:208px;width:699px;height:17px;background:#E6E6E6;"></div>
<div class="a" style="left:18px;top:225px;width:699px;height:1px;background:#B0B0B0;"></div>
<div class="a" style="left:6px;top:208px;width:11px;height:17px;background:#D4D0C8;"></div>
<div class="a" style="left:6px;top:208px;width:11px;height:1px;background:#FFFFFF;"></div>
<div class="a" style="left:6px;top:208px;width:1px;height:17px;background:#FFFFFF;"></div>
<div class="a" style="left:6px;top:225px;width:12px;height:1px;background:#000;"></div>
<div class="a" style="left:17px;top:208px;width:1px;height:17px;background:#000;"></div>
<div class="txt" style="left:18px;width:70px;text-align:right;top:211px;color:#880000;letter-spacing:0.1px">70</div>
<div class="txt" style="left:95px;top:211px;color:#000018;letter-spacing:0.15px">1.1.02.01</div>
<div class="txt" style="left:243px;top:211px;width:196px;overflow:hidden;color:#000018;letter-spacing:-0.257px">Banco do Brasil</div>
<div class="txt" style="left:441px;top:211px;width:276px;overflow:hidden;color:#000018;letter-spacing:-0.078px">Conta 00.000-0 do Banco do Brasil</div>
<div class="a" style="left:18px;top:226px;width:699px;height:17px;background:#FFFFFF;"></div>
<div class="a" style="left:18px;top:243px;width:699px;height:1px;background:#B0B0B0;"></div>
<div class="a" style="left:6px;top:226px;width:11px;height:17px;background:#D4D0C8;"></div>
<div class="a" style="left:6px;top:226px;width:11px;height:1px;background:#FFFFFF;"></div>
<div class="a" style="left:6px;top:226px;width:1px;height:17px;background:#FFFFFF;"></div>
<div class="a" style="left:6px;top:243px;width:12px;height:1px;background:#000;"></div>
<div class="a" style="left:17px;top:226px;width:1px;height:17px;background:#000;"></div>
<div class="txt" style="left:18px;width:70px;text-align:right;top:229px;color:#880000;letter-spacing:0.1px">71</div>
<div class="txt" style="left:95px;top:229px;color:#000018;letter-spacing:0.15px">1.1.02.02</div>
<div class="txt" style="left:243px;top:229px;width:196px;overflow:hidden;color:#000018;letter-spacing:-0.241px">Caixa Econômica Federal</div>
<div class="txt" style="left:441px;top:229px;width:276px;overflow:hidden;color:#000018;letter-spacing:-0.105px">Conta 00.000-0 da CEF</div>
<div class="a" style="left:18px;top:244px;width:699px;height:17px;background:#E6E6E6;"></div>
<div class="a" style="left:18px;top:261px;width:699px;height:1px;background:#B0B0B0;"></div>
<div class="a" style="left:6px;top:244px;width:11px;height:17px;background:#D4D0C8;"></div>
<div class="a" style="left:6px;top:244px;width:11px;height:1px;background:#FFFFFF;"></div>
<div class="a" style="left:6px;top:244px;width:1px;height:17px;background:#FFFFFF;"></div>
<div class="a" style="left:6px;top:261px;width:12px;height:1px;background:#000;"></div>
<div class="a" style="left:17px;top:244px;width:1px;height:17px;background:#000;"></div>
<div class="txt" style="left:18px;width:70px;text-align:right;top:247px;color:#880000;letter-spacing:0.1px">5</div>
<div class="txt" style="left:95px;top:247px;color:#000018;letter-spacing:0.15px">1.1.03</div>
<div class="txt" style="left:243px;top:247px;width:196px;overflow:hidden;color:#000018;letter-spacing:-0.086px">Estoques</div>
<div class="a" style="left:18px;top:262px;width:699px;height:17px;background:#FFFFFF;"></div>
<div class="a" style="left:18px;top:279px;width:699px;height:1px;background:#B0B0B0;"></div>
<div class="a" style="left:6px;top:262px;width:11px;height:17px;background:#D4D0C8;"></div>
<div class="a" style="left:6px;top:262px;width:11px;height:1px;background:#FFFFFF;"></div>
<div class="a" style="left:6px;top:262px;width:1px;height:17px;background:#FFFFFF;"></div>
<div class="a" style="left:6px;top:279px;width:12px;height:1px;background:#000;"></div>
<div class="a" style="left:17px;top:262px;width:1px;height:17px;background:#000;"></div>
<div class="txt" style="left:18px;width:70px;text-align:right;top:265px;color:#880000;letter-spacing:0.1px">109</div>
<div class="txt" style="left:95px;top:265px;color:#000018;letter-spacing:0.15px">1.1.03.01</div>
<div class="txt" style="left:243px;top:265px;width:196px;overflow:hidden;color:#000018;letter-spacing:-0.153px">Mercadorias Próprias</div>
<div class="a" style="left:18px;top:280px;width:699px;height:17px;background:#E6E6E6;"></div>
<div class="a" style="left:18px;top:297px;width:699px;height:1px;background:#B0B0B0;"></div>
<div class="a" style="left:6px;top:280px;width:11px;height:17px;background:#D4D0C8;"></div>
<div class="a" style="left:6px;top:280px;width:11px;height:1px;background:#FFFFFF;"></div>
<div class="a" style="left:6px;top:280px;width:1px;height:17px;background:#FFFFFF;"></div>
<div class="a" style="left:6px;top:297px;width:12px;height:1px;background:#000;"></div>
<div class="a" style="left:17px;top:280px;width:1px;height:17px;background:#000;"></div>
<div class="txt" style="left:18px;width:70px;text-align:right;top:283px;color:#880000;letter-spacing:0.1px">110</div>
<div class="txt" style="left:95px;top:283px;color:#000018;letter-spacing:0.15px">1.1.03.02</div>
<div class="txt" style="left:243px;top:283px;width:196px;overflow:hidden;color:#000018;letter-spacing:-0.061px">Mercadorias de Terceiros</div>
<div class="a" style="left:18px;top:298px;width:699px;height:17px;background:#FFFFFF;"></div>
<div class="a" style="left:18px;top:315px;width:699px;height:1px;background:#B0B0B0;"></div>
<div class="a" style="left:6px;top:298px;width:11px;height:17px;background:#D4D0C8;"></div>
<div class="a" style="left:6px;top:298px;width:11px;height:1px;background:#FFFFFF;"></div>
<div class="a" style="left:6px;top:298px;width:1px;height:17px;background:#FFFFFF;"></div>
<div class="a" style="left:6px;top:315px;width:12px;height:1px;background:#000;"></div>
<div class="a" style="left:17px;top:298px;width:1px;height:17px;background:#000;"></div>
<div class="txt" style="left:18px;width:70px;text-align:right;top:301px;color:#880000;letter-spacing:0.1px">111</div>
<div class="txt" style="left:95px;top:301px;color:#000018;letter-spacing:0.15px">1.1.03.03</div>
<div class="txt" style="left:243px;top:301px;width:196px;overflow:hidden;color:#000018;letter-spacing:-0.193px">Mercadorias Recebidas/Remetidas</div>
<div class="a" style="left:18px;top:316px;width:699px;height:17px;background:#E6E6E6;"></div>
<div class="a" style="left:18px;top:333px;width:699px;height:1px;background:#B0B0B0;"></div>
<div class="a" style="left:6px;top:316px;width:11px;height:17px;background:#D4D0C8;"></div>
<div class="a" style="left:6px;top:316px;width:11px;height:1px;background:#FFFFFF;"></div>
<div class="a" style="left:6px;top:316px;width:1px;height:17px;background:#FFFFFF;"></div>
<div class="a" style="left:6px;top:333px;width:12px;height:1px;background:#000;"></div>
<div class="a" style="left:17px;top:316px;width:1px;height:17px;background:#000;"></div>
<div class="txt" style="left:18px;width:70px;text-align:right;top:319px;color:#880000;letter-spacing:0.1px">6</div>
<div class="txt" style="left:95px;top:319px;color:#000018;letter-spacing:0.15px">1.1.04</div>
<div class="txt" style="left:243px;top:319px;width:196px;overflow:hidden;color:#000018;letter-spacing:-0.130px">Clientes - Valores a Receber</div>
<div class="a" style="left:18px;top:334px;width:699px;height:17px;background:#FFFFFF;"></div>
<div class="a" style="left:18px;top:351px;width:699px;height:1px;background:#B0B0B0;"></div>
<div class="a" style="left:6px;top:334px;width:11px;height:17px;background:#D4D0C8;"></div>
<div class="a" style="left:6px;top:334px;width:11px;height:1px;background:#FFFFFF;"></div>
<div class="a" style="left:6px;top:334px;width:1px;height:17px;background:#FFFFFF;"></div>
<div class="a" style="left:6px;top:351px;width:12px;height:1px;background:#000;"></div>
<div class="a" style="left:17px;top:334px;width:1px;height:17px;background:#000;"></div>
<div class="txt" style="left:18px;width:70px;text-align:right;top:337px;color:#880000;letter-spacing:0.1px">7</div>
<div class="txt" style="left:95px;top:337px;color:#000018;letter-spacing:0.15px">1.1.05</div>
<div class="txt" style="left:243px;top:337px;width:196px;overflow:hidden;color:#000018;letter-spacing:-0.060px">Contas a Receber</div>
<div class="a" style="left:18px;top:352px;width:699px;height:17px;background:#E6E6E6;"></div>
<div class="a" style="left:18px;top:369px;width:699px;height:1px;background:#B0B0B0;"></div>
<div class="a" style="left:6px;top:352px;width:11px;height:17px;background:#D4D0C8;"></div>
<div class="a" style="left:6px;top:352px;width:11px;height:1px;background:#FFFFFF;"></div>
<div class="a" style="left:6px;top:352px;width:1px;height:17px;background:#FFFFFF;"></div>
<div class="a" style="left:6px;top:369px;width:12px;height:1px;background:#000;"></div>
<div class="a" style="left:17px;top:352px;width:1px;height:17px;background:#000;"></div>
<div class="txt" style="left:18px;width:70px;text-align:right;top:355px;color:#880000;letter-spacing:0.1px">73</div>
<div class="txt" style="left:95px;top:355px;color:#000018;letter-spacing:0.15px">1.1.05.01</div>
<div class="txt" style="left:243px;top:355px;width:196px;overflow:hidden;color:#000018;letter-spacing:-0.252px">Promissórias a Receber</div>
<div class="txt" style="left:441px;top:355px;width:276px;overflow:hidden;color:#000018;letter-spacing:-0.200px">Promissórias a receber referente a empréstimos concedidos</div>
<div class="a" style="left:18px;top:370px;width:699px;height:17px;background:#FFFFFF;"></div>
<div class="a" style="left:18px;top:387px;width:699px;height:1px;background:#B0B0B0;"></div>
<div class="a" style="left:6px;top:370px;width:11px;height:17px;background:#D4D0C8;"></div>
<div class="a" style="left:6px;top:370px;width:11px;height:1px;background:#FFFFFF;"></div>
<div class="a" style="left:6px;top:370px;width:1px;height:17px;background:#FFFFFF;"></div>
<div class="a" style="left:6px;top:387px;width:12px;height:1px;background:#000;"></div>
<div class="a" style="left:17px;top:370px;width:1px;height:17px;background:#000;"></div>
<div class="txt" style="left:18px;width:70px;text-align:right;top:373px;color:#880000;letter-spacing:0.1px">75</div>
<div class="txt" style="left:95px;top:373px;color:#000018;letter-spacing:0.15px">1.1.05.02</div>
<div class="txt" style="left:243px;top:373px;width:196px;overflow:hidden;color:#000018;letter-spacing:-0.211px">Cheques Recebidos a Descontar</div>
<div class="txt" style="left:441px;top:373px;width:276px;overflow:hidden;color:#000018;letter-spacing:-0.200px">Cheques recebidos de terceiros que ainda não foram descontados</div>
<div class="a" style="left:18px;top:388px;width:699px;height:17px;background:#E6E6E6;"></div>
<div class="a" style="left:18px;top:405px;width:699px;height:1px;background:#B0B0B0;"></div>
<div class="a" style="left:6px;top:388px;width:11px;height:17px;background:#D4D0C8;"></div>
<div class="a" style="left:6px;top:388px;width:11px;height:1px;background:#FFFFFF;"></div>
<div class="a" style="left:6px;top:388px;width:1px;height:17px;background:#FFFFFF;"></div>
<div class="a" style="left:6px;top:405px;width:12px;height:1px;background:#000;"></div>
<div class="a" style="left:17px;top:388px;width:1px;height:17px;background:#000;"></div>
<div class="txt" style="left:18px;width:70px;text-align:right;top:391px;color:#880000;letter-spacing:0.1px">112</div>
<div class="txt" style="left:95px;top:391px;color:#000018;letter-spacing:0.15px">1.1.05.03</div>
<div class="txt" style="left:243px;top:391px;width:196px;overflow:hidden;color:#000018;letter-spacing:-0.031px">Vendas no Cartão de Crédito</div>
<div class="a" style="left:18px;top:406px;width:699px;height:17px;background:#FFFFFF;"></div>
<div class="a" style="left:18px;top:423px;width:699px;height:1px;background:#B0B0B0;"></div>
<div class="a" style="left:6px;top:406px;width:11px;height:17px;background:#D4D0C8;"></div>
<div class="a" style="left:6px;top:406px;width:11px;height:1px;background:#FFFFFF;"></div>
<div class="a" style="left:6px;top:406px;width:1px;height:17px;background:#FFFFFF;"></div>
<div class="a" style="left:6px;top:423px;width:12px;height:1px;background:#000;"></div>
<div class="a" style="left:17px;top:406px;width:1px;height:17px;background:#000;"></div>
<div class="txt" style="left:18px;width:70px;text-align:right;top:409px;color:#880000;letter-spacing:0.1px">114</div>
<div class="txt" style="left:95px;top:409px;color:#000018;letter-spacing:0.15px">1.1.05.04</div>
<div class="txt" style="left:243px;top:409px;width:196px;overflow:hidden;color:#000018;letter-spacing:-0.121px">Contas Diversas a Receber</div>
<div class="a" style="left:18px;top:424px;width:699px;height:17px;background:#E6E6E6;"></div>
<div class="a" style="left:18px;top:441px;width:699px;height:1px;background:#B0B0B0;"></div>
<div class="a" style="left:6px;top:424px;width:11px;height:17px;background:#D4D0C8;"></div>
<div class="a" style="left:6px;top:424px;width:11px;height:1px;background:#FFFFFF;"></div>
<div class="a" style="left:6px;top:424px;width:1px;height:17px;background:#FFFFFF;"></div>
<div class="a" style="left:6px;top:441px;width:12px;height:1px;background:#000;"></div>
<div class="a" style="left:17px;top:424px;width:1px;height:17px;background:#000;"></div>
<div class="txt" style="left:18px;width:70px;text-align:right;top:427px;color:#880000;letter-spacing:0.1px">117</div>
<div class="txt" style="left:95px;top:427px;color:#000018;letter-spacing:0.15px">1.1.05.05</div>
<div class="txt" style="left:243px;top:427px;width:196px;overflow:hidden;color:#000018;letter-spacing:-0.096px">Compras Faturadas a Entregar</div>
<div class="a" style="left:18px;top:442px;width:699px;height:17px;background:#FFFFFF;"></div>
<div class="a" style="left:18px;top:459px;width:699px;height:1px;background:#B0B0B0;"></div>
<div class="a" style="left:6px;top:442px;width:11px;height:17px;background:#D4D0C8;"></div>
<div class="a" style="left:6px;top:442px;width:11px;height:1px;background:#FFFFFF;"></div>
<div class="a" style="left:6px;top:442px;width:1px;height:17px;background:#FFFFFF;"></div>
<div class="a" style="left:6px;top:459px;width:12px;height:1px;background:#000;"></div>
<div class="a" style="left:17px;top:442px;width:1px;height:17px;background:#000;"></div>
<div class="txt" style="left:18px;width:70px;text-align:right;top:445px;color:#880000;letter-spacing:0.1px">122</div>
<div class="txt" style="left:95px;top:445px;color:#000018;letter-spacing:0.15px">1.1.05.06</div>
<div class="txt" style="left:243px;top:445px;width:196px;overflow:hidden;color:#000018;letter-spacing:-0.114px">Juros/Multas a Receber</div>
<div class="a" style="left:18px;top:460px;width:699px;height:17px;background:#E6E6E6;"></div>
<div class="a" style="left:18px;top:477px;width:699px;height:1px;background:#B0B0B0;"></div>
<div class="a" style="left:6px;top:460px;width:11px;height:17px;background:#D4D0C8;"></div>
<div class="a" style="left:6px;top:460px;width:11px;height:1px;background:#FFFFFF;"></div>
<div class="a" style="left:6px;top:460px;width:1px;height:17px;background:#FFFFFF;"></div>
<div class="a" style="left:6px;top:477px;width:12px;height:1px;background:#000;"></div>
<div class="a" style="left:17px;top:460px;width:1px;height:17px;background:#000;"></div>
<div class="txt" style="left:18px;width:70px;text-align:right;top:463px;color:#880000;letter-spacing:0.1px">124</div>
<div class="txt" style="left:95px;top:463px;color:#000018;letter-spacing:0.15px">1.1.05.07</div>
<div class="txt" style="left:243px;top:463px;width:196px;overflow:hidden;color:#000018;letter-spacing:-0.142px">Vendas em Ticket Refeição/Alimentação</div>
<div class="a" style="left:18px;top:478px;width:699px;height:17px;background:#FFFFFF;"></div>
<div class="a" style="left:18px;top:495px;width:699px;height:1px;background:#B0B0B0;"></div>
<div class="a" style="left:6px;top:478px;width:11px;height:17px;background:#D4D0C8;"></div>
<div class="a" style="left:6px;top:478px;width:11px;height:1px;background:#FFFFFF;"></div>
<div class="a" style="left:6px;top:478px;width:1px;height:17px;background:#FFFFFF;"></div>
<div class="a" style="left:6px;top:495px;width:12px;height:1px;background:#000;"></div>
<div class="a" style="left:17px;top:478px;width:1px;height:17px;background:#000;"></div>
<div class="txt" style="left:18px;width:70px;text-align:right;top:481px;color:#880000;letter-spacing:0.1px">8</div>
<div class="txt" style="left:95px;top:481px;color:#000018;letter-spacing:0.15px">1.1.06</div>
<div class="txt" style="left:243px;top:481px;width:196px;overflow:hidden;color:#000018;letter-spacing:-0.167px">Adiantamentos e Devoluções de Compras</div>
<div class="a" style="left:18px;top:496px;width:699px;height:17px;background:#E6E6E6;"></div>
<div class="a" style="left:18px;top:513px;width:699px;height:1px;background:#B0B0B0;"></div>
<div class="a" style="left:6px;top:496px;width:11px;height:17px;background:#D4D0C8;"></div>
<div class="a" style="left:6px;top:496px;width:11px;height:1px;background:#FFFFFF;"></div>
<div class="a" style="left:6px;top:496px;width:1px;height:17px;background:#FFFFFF;"></div>
<div class="a" style="left:6px;top:513px;width:12px;height:1px;background:#000;"></div>
<div class="a" style="left:17px;top:496px;width:1px;height:17px;background:#000;"></div>
<div class="txt" style="left:18px;width:70px;text-align:right;top:499px;color:#880000;letter-spacing:0.1px">9</div>
<div class="txt" style="left:95px;top:499px;color:#000018;letter-spacing:0.15px">1.1.07</div>
<div class="txt" style="left:243px;top:499px;width:196px;overflow:hidden;color:#000018;letter-spacing:-0.218px">Devoluções de Comissão sobre Venda</div>
<div class="a" style="left:92px;top:100px;width:1px;height:414px;background:#B0B0B0;"></div>
<div class="a" style="left:176px;top:100px;width:1px;height:414px;background:#B0B0B0;"></div>
<div class="a" style="left:241px;top:100px;width:1px;height:414px;background:#B0B0B0;"></div>
<div class="a" style="left:439px;top:100px;width:1px;height:414px;background:#B0B0B0;"></div>
<svg style="left:9px;top:122px" width="7" height="11" shape-rendering="crispEdges"><path d="M0 0h1v1h1v1h1v1h1v1h1v1h1v1h-1v1h-1v1h-1v1h-1v1h-1v1h-1z" fill="#000"/></svg>
<div class="a" style="left:717px;top:82px;width:16px;height:440px;background:#fff;background-image:conic-gradient(#D4D0C8 25%,#fff 25% 50%,#D4D0C8 50% 75%,#fff 75%);background-size:2px 2px"></div>
<div class="a" style="left:717px;top:82px;width:16px;height:16px;background:#D4D0C8;box-shadow:inset -1px -1px #404040,inset 1px 1px #D4D0C8,inset -2px -2px #808080,inset 2px 2px #FFFFFF"></div>
<svg style="left:717px;top:82px" width="16" height="16" shape-rendering="crispEdges"><rect x="7" y="6" width="1" height="1" fill="#000"/><rect x="6" y="7" width="3" height="1" fill="#000"/><rect x="5" y="8" width="5" height="1" fill="#000"/><rect x="4" y="9" width="7" height="1" fill="#000"/></svg>
<div class="a" style="left:717px;top:102px;width:16px;height:58px;background:#D4D0C8;box-shadow:inset -1px -1px #404040,inset 1px 1px #D4D0C8,inset -2px -2px #808080,inset 2px 2px #FFFFFF"></div>
<div class="a" style="left:717px;top:506px;width:16px;height:16px;background:#D4D0C8;box-shadow:inset -1px -1px #404040,inset 1px 1px #D4D0C8,inset -2px -2px #808080,inset 2px 2px #FFFFFF"></div>
<svg style="left:717px;top:506px" width="16" height="16" shape-rendering="crispEdges"><rect x="7" y="9" width="1" height="1" fill="#000"/><rect x="6" y="8" width="3" height="1" fill="#000"/><rect x="5" y="7" width="5" height="1" fill="#000"/><rect x="4" y="6" width="7" height="1" fill="#000"/></svg>
<div class="a" style="left:6px;top:522px;width:711px;height:16px;background:#fff;background-image:conic-gradient(#D4D0C8 25%,#fff 25% 50%,#D4D0C8 50% 75%,#fff 75%);background-size:2px 2px"></div>
<div class="a" style="left:6px;top:522px;width:16px;height:16px;background:#D4D0C8;box-shadow:inset -1px -1px #404040,inset 1px 1px #D4D0C8,inset -2px -2px #808080,inset 2px 2px #FFFFFF"></div>
<svg style="left:6px;top:522px" width="16" height="16" shape-rendering="crispEdges"><rect x="5" y="7" width="1" height="1" fill="#000"/><rect x="6" y="6" width="1" height="3" fill="#000"/><rect x="7" y="5" width="1" height="5" fill="#000"/><rect x="8" y="4" width="1" height="7" fill="#000"/></svg>
<div class="a" style="left:22px;top:522px;width:16px;height:16px;background:#D4D0C8;box-shadow:inset -1px -1px #404040,inset 1px 1px #D4D0C8,inset -2px -2px #808080,inset 2px 2px #FFFFFF"></div>
<div class="a" style="left:701px;top:522px;width:16px;height:16px;background:#D4D0C8;box-shadow:inset -1px -1px #404040,inset 1px 1px #D4D0C8,inset -2px -2px #808080,inset 2px 2px #FFFFFF"></div>
<svg style="left:701px;top:522px" width="16" height="16" shape-rendering="crispEdges"><rect x="9" y="7" width="1" height="1" fill="#000"/><rect x="8" y="6" width="1" height="3" fill="#000"/><rect x="7" y="5" width="1" height="5" fill="#000"/><rect x="6" y="4" width="1" height="7" fill="#000"/></svg>
<div class="a" style="left:717px;top:522px;width:20px;height:19px;background:#D4D0C8;"></div>
<div class="a" style="left:717px;top:522px;width:16px;height:1px;background:#FFFFFF;"></div>
<div class="a" style="left:717px;top:522px;width:1px;height:16px;background:#FFFFFF;"></div>
<div class="a" style="left:657px;top:545px;width:75px;height:25px;background:#D4D0C8;box-shadow:inset -1px -1px #404040,inset 1px 1px #D4D0C8,inset -2px -2px #808080,inset 2px 2px #FFFFFF"></div>
<svg style="left:672px;top:550px" width="18" height="17" shape-rendering="crispEdges"><rect x="6" y="0" width="11" height="1" fill="#000"/><rect x="6" y="0" width="1" height="13" fill="#000"/><rect x="7" y="1" width="5" height="2" fill="#F8F000"/><rect x="7" y="1" width="2" height="11" fill="#F8F000"/><rect x="9" y="2" width="1" height="14" fill="#000"/><rect x="10" y="2" width="1" height="1" fill="#000"/><rect x="10" y="15" width="1" height="1" fill="#000"/><rect x="10" y="3" width="1" height="1" fill="#C8C880"/><rect x="10" y="4" width="1" height="1" fill="#8C8C30"/><rect x="10" y="5" width="1" height="1" fill="#C8C880"/><rect x="10" y="6" width="1" height="1" fill="#8C8C30"/><rect x="10" y="7" width="1" height="1" fill="#C8C880"/><rect x="10" y="8" width="1" height="1" fill="#8C8C30"/><rect x="10" y="9" width="1" height="1" fill="#C8C880"/><rect x="10" y="10" width="1" height="1" fill="#8C8C30"/><rect x="10" y="11" width="1" height="1" fill="#C8C880"/><rect x="10" y="12" width="1" height="1" fill="#8C8C30"/><rect x="10" y="13" width="1" height="1" fill="#C8C880"/><rect x="10" y="14" width="1" height="1" fill="#8C8C30"/><rect x="11" y="1" width="1" height="1" fill="#000"/><rect x="11" y="14" width="1" height="1" fill="#000"/><rect x="11" y="2" width="1" height="1" fill="#C8C880"/><rect x="11" y="3" width="1" height="1" fill="#8C8C30"/><rect x="11" y="4" width="1" height="1" fill="#C8C880"/><rect x="11" y="5" width="1" height="1" fill="#8C8C30"/><rect x="11" y="6" width="1" height="1" fill="#C8C880"/><rect x="11" y="7" width="1" height="1" fill="#8C8C30"/><rect x="11" y="8" width="1" height="1" fill="#C8C880"/><rect x="11" y="9" width="1" height="1" fill="#8C8C30"/><rect x="11" y="10" width="1" height="1" fill="#C8C880"/><rect x="11" y="11" width="1" height="1" fill="#8C8C30"/><rect x="11" y="12" width="1" height="1" fill="#C8C880"/><rect x="11" y="13" width="1" height="1" fill="#8C8C30"/><rect x="12" y="1" width="1" height="1" fill="#000"/><rect x="12" y="14" width="1" height="1" fill="#000"/><rect x="12" y="2" width="1" height="1" fill="#8C8C30"/><rect x="12" y="3" width="1" height="1" fill="#C8C880"/><rect x="12" y="4" width="1" height="1" fill="#8C8C30"/><rect x="12" y="5" width="1" height="1" fill="#C8C880"/><rect x="12" y="6" width="1" height="1" fill="#8C8C30"/><rect x="12" y="7" width="1" height="1" fill="#C8C880"/><rect x="12" y="8" width="1" height="1" fill="#8C8C30"/><rect x="12" y="9" width="1" height="1" fill="#C8C880"/><rect x="12" y="10" width="1" height="1" fill="#8C8C30"/><rect x="12" y="11" width="1" height="1" fill="#C8C880"/><rect x="12" y="12" width="1" height="1" fill="#8C8C30"/><rect x="12" y="13" width="1" height="1" fill="#C8C880"/><rect x="13" y="1" width="1" height="1" fill="#000"/><rect x="13" y="13" width="1" height="1" fill="#000"/><rect x="13" y="2" width="1" height="1" fill="#C8C880"/><rect x="13" y="3" width="1" height="1" fill="#8C8C30"/><rect x="13" y="4" width="1" height="1" fill="#C8C880"/><rect x="13" y="5" width="1" height="1" fill="#8C8C30"/><rect x="13" y="6" width="1" height="1" fill="#C8C880"/><rect x="13" y="7" width="1" height="1" fill="#8C8C30"/><rect x="13" y="8" width="1" height="1" fill="#C8C880"/><rect x="13" y="9" width="1" height="1" fill="#8C8C30"/><rect x="13" y="10" width="1" height="1" fill="#C8C880"/><rect x="13" y="11" width="1" height="1" fill="#8C8C30"/><rect x="13" y="12" width="1" height="1" fill="#C8C880"/><rect x="14" y="1" width="1" height="1" fill="#000"/><rect x="14" y="13" width="1" height="1" fill="#000"/><rect x="14" y="2" width="1" height="1" fill="#8C8C30"/><rect x="14" y="3" width="1" height="1" fill="#C8C880"/><rect x="14" y="4" width="1" height="1" fill="#8C8C30"/><rect x="14" y="5" width="1" height="1" fill="#C8C880"/><rect x="14" y="6" width="1" height="1" fill="#8C8C30"/><rect x="14" y="7" width="1" height="1" fill="#C8C880"/><rect x="14" y="8" width="1" height="1" fill="#8C8C30"/><rect x="14" y="9" width="1" height="1" fill="#C8C880"/><rect x="14" y="10" width="1" height="1" fill="#8C8C30"/><rect x="14" y="11" width="1" height="1" fill="#C8C880"/><rect x="14" y="12" width="1" height="1" fill="#8C8C30"/><rect x="15" y="0" width="1" height="1" fill="#000"/><rect x="15" y="12" width="1" height="1" fill="#000"/><rect x="15" y="1" width="1" height="1" fill="#8C8C30"/><rect x="15" y="2" width="1" height="1" fill="#C8C880"/><rect x="15" y="3" width="1" height="1" fill="#8C8C30"/><rect x="15" y="4" width="1" height="1" fill="#C8C880"/><rect x="15" y="5" width="1" height="1" fill="#8C8C30"/><rect x="15" y="6" width="1" height="1" fill="#C8C880"/><rect x="15" y="7" width="1" height="1" fill="#8C8C30"/><rect x="15" y="8" width="1" height="1" fill="#C8C880"/><rect x="15" y="9" width="1" height="1" fill="#8C8C30"/><rect x="15" y="10" width="1" height="1" fill="#C8C880"/><rect x="15" y="11" width="1" height="1" fill="#8C8C30"/><rect x="16" y="0" width="1" height="13" fill="#000"/><rect x="11" y="9" width="2" height="1" fill="#000"/><rect x="1" y="12" width="6" height="1" fill="#000"/><rect x="1" y="13" width="1" height="1" fill="#A0A020"/><rect x="2" y="13" width="1" height="1" fill="#E8E880"/><rect x="3" y="13" width="1" height="1" fill="#A0A020"/><rect x="4" y="13" width="1" height="1" fill="#E8E880"/><rect x="5" y="13" width="1" height="1" fill="#A0A020"/><rect x="6" y="13" width="1" height="1" fill="#E8E880"/><rect x="7" y="13" width="1" height="1" fill="#A0A020"/><rect x="8" y="13" width="1" height="1" fill="#E8E880"/><rect x="1" y="14" width="1" height="1" fill="#E8E880"/><rect x="2" y="14" width="1" height="1" fill="#A0A020"/><rect x="3" y="14" width="1" height="1" fill="#E8E880"/><rect x="4" y="14" width="1" height="1" fill="#A0A020"/><rect x="5" y="14" width="1" height="1" fill="#E8E880"/><rect x="6" y="14" width="1" height="1" fill="#A0A020"/><rect x="7" y="14" width="1" height="1" fill="#E8E880"/><rect x="8" y="14" width="1" height="1" fill="#A0A020"/><rect x="1" y="15" width="1" height="1" fill="#A0A020"/><rect x="2" y="15" width="1" height="1" fill="#E8E880"/><rect x="3" y="15" width="1" height="1" fill="#A0A020"/><rect x="4" y="15" width="1" height="1" fill="#E8E880"/><rect x="5" y="15" width="1" height="1" fill="#A0A020"/><rect x="6" y="15" width="1" height="1" fill="#E8E880"/><rect x="7" y="15" width="1" height="1" fill="#A0A020"/><rect x="8" y="15" width="1" height="1" fill="#E8E880"/></svg>
<div class="txt" style="left:698px;top:552px;color:#000;">Sair</div>
</body></html>
